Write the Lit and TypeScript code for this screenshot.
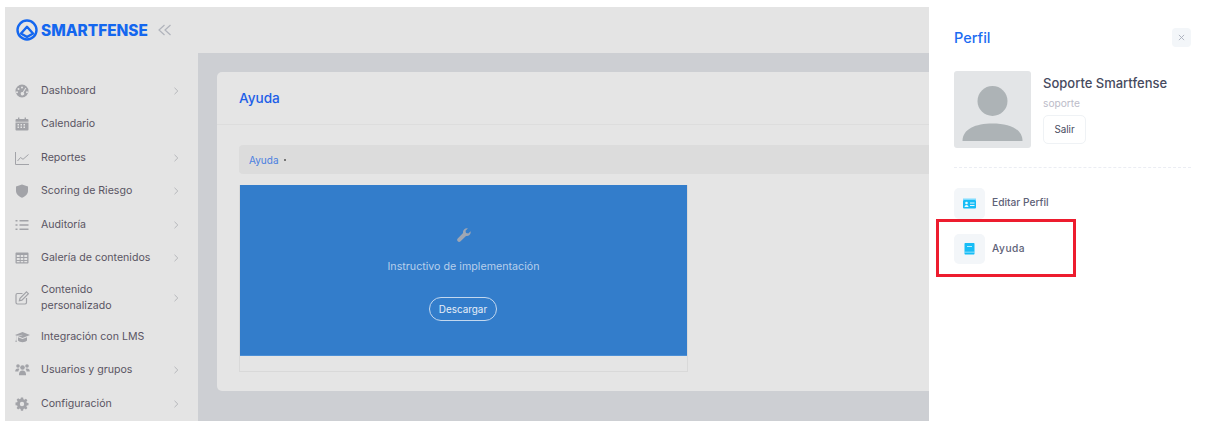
import { LitElement, html, css, svg } from "lit";
import { customElement } from "lit/decorators.js";

const ICONS: Record<string, unknown> = {
  gauge: svg`<path fill-rule="evenodd" d="M7 .5a6.500 6.500 0 1 0 0 13 6.500 6.500 0 0 0 0-13ZM7 2.400a1 1 0 1 1 0 2 1 1 0 0 1 0-2ZM3.500 3.900a1 1 0 1 1 0 2 1 1 0 0 1 0-2ZM2 7.200a1 1 0 1 1 0 2 1 1 0 0 1 0-2Zm10 0a1 1 0 1 1 0 2 1 1 0 0 1 0-2ZM10.400 3.700l.8.5-2.600 4.300a1.700 1.700 0 1 1-.9-.5l2.700-4.300Z"/>`,
  calendar: svg`<path fill-rule="evenodd" d="M3 .5h1.400V2h5.200V.5H11V2h1.600c.5 0 .9.4.9.9V4.800H.5V2.900c0-.5.4-.9.9-.9H3V.5ZM.5 5.600h13v7c0 .5-.4.9-.9.9H1.400a.9.9 0 0 1-.9-.9v-7Zm2 1.400v1.400H4V7H2.500Zm3 0v1.400H7V7H5.500Zm3 0v1.400H10V7H8.500Zm-6 2.600V11H4V9.600H2.500Zm3 0V11H7V9.600H5.500Zm3 0V11H10V9.600H8.500Z"/>`,
  chart: svg`<path fill="none" stroke="currentColor" stroke-width="1" d="M.5 1v12.500H14M2.500 10l3-3.500 2.500 1.800L13.500 3.500"/>`,
  shield: svg`<path d="M7 .5 13 2.500v4.300c0 3.400-2.500 5.700-6 6.900-3.500-1.200-6-3.500-6-6.900V2.500Z"/>`,
  list: svg`<path d="M.5 2h2v1.500h-2ZM4.500 2h9v1.500h-9ZM.5 6.200h2v1.500h-2ZM4.500 6.200h9v1.500h-9ZM.5 10.500h2V12h-2ZM4.500 10.500h9V12h-9Z"/>`,
  table: svg`<path fill-rule="evenodd" d="M1.500 1.500h11c.6 0 1 .4 1 1v9c0 .6-.4 1-1 1h-11c-.6 0-1-.4-1-1v-9c0-.6.4-1 1-1ZM1.800 4v2.100h2.900V4Zm3.900 0v2.100h2.600V4Zm3.600 0v2.100h2.900V4ZM1.800 7v2h2.900V7Zm3.900 0v2h2.600V7Zm3.600 0v2h2.900V7ZM1.800 10v1.300h2.900V10Zm3.900 0v1.300h2.600V10Zm3.600 0v1.300h2.900V10Z"/>`,
  edit: svg`<path fill="none" stroke="currentColor" stroke-width="1.200" d="M7.500 2.500H2.400c-.8 0-1.400.6-1.400 1.400v7.700c0 .8.6 1.400 1.400 1.400h7.700c.8 0 1.400-.6 1.400-1.400V7"/><path d="M11.500.8l1.900 1.900-6.500 6.500-2.500.6.6-2.500Z" fill="none" stroke="currentColor" stroke-width="1.200"/>`,
  cap: svg`<path d="M7.500 2 15 5 7.500 8 2.800 6.100 7.400 5.300 7.300 4.800 1.800 5.700 0 5ZM3 7.200l4.500 1.800L12 7.200v3.300c-1 1.100-2.700 1.700-4.500 1.700S4 11.600 3 10.500ZM1.200 6v3.500l.6 2.500H.4L1 9.500V5.800Z"/>`,
  users: svg`<circle cx="3" cy="3" r="1.800"/><circle cx="12" cy="3" r="1.800"/><circle cx="7.500" cy="4.500" r="2.300"/><path d="M.2 8.600C.2 6.800 1.200 5.600 3 5.600c.6 0 1 .1 1.400.4-.6.7-1 1.600-1 2.600H.2ZM14.800 8.600c0-1.800-1-3-2.800-3-.6 0-1 .1-1.400.4.6.7 1 1.600 1 2.600ZM4 11.200c0-2.200 1.400-3.800 3.500-3.800S11 9 11 11.200v1H4Z"/>`,
  cog: svg`<path fill-rule="evenodd" d="M5.900.5h2.200l.3 1.800 1 .4 1.500-1 1.500 1.500-1 1.500.4 1 1.700.3v2.200l-1.700.3-.4 1 1 1.500-1.500 1.500-1.500-1-1 .4-.3 1.800H5.900l-.3-1.800-1-.4-1.500 1-1.500-1.500 1-1.500-.4-1-1.700-.3V5.500l1.700-.3.4-1-1-1.500 1.500-1.500 1.500 1 1-.4ZM7 4.800a2.200 2.200 0 1 0 0 4.400 2.200 2.200 0 0 0 0-4.400Z"/>`,
};

const NAV: { icon: string; label: string[]; arrow: boolean }[] = [
  { icon: "gauge", label: ["Dashboard"], arrow: true },
  { icon: "calendar", label: ["Calendario"], arrow: false },
  { icon: "chart", label: ["Reportes"], arrow: true },
  { icon: "shield", label: ["Scoring de Riesgo"], arrow: true },
  { icon: "list", label: ["Auditoría"], arrow: true },
  { icon: "table", label: ["Galería de contenidos"], arrow: true },
  { icon: "edit", label: ["Contenido", "personalizado"], arrow: true },
  { icon: "cap", label: ["Integración con LMS"], arrow: false },
  { icon: "users", label: ["Usuarios y grupos"], arrow: true },
  { icon: "cog", label: ["Configuración"], arrow: true },
];

@customElement("app-root")
export class AppRoot extends LitElement {
  static styles = css`
    :host {
      display: block;
      width: 1216px;
      height: 433px;
      overflow: hidden;
      background: #fff;
      font-family: Inter, "Noto Sans", sans-serif;
    }
    .page { display: flex; height: 433px; }
    .shot {
      width: 924px;
      height: 414px;
      margin: 7px 0 0 5px;
      display: flex;
      background: #cdcfd3;
      overflow: hidden;
      flex: none;
    }
    .side {
      width: 193px;
      flex: none;
      background: #e4e4e4;
      display: flex;
      flex-direction: column;
    }
    .brand {
      height: 46px;
      display: flex;
      align-items: center;
      padding-left: 11px;
      margin-bottom: 21px;
      color: #1467ef;
    }
    .brand .logo { width: 22px; height: 22px; margin-right: 3px; }
    .brand b { font-size: 15.400px; font-weight: 800; }
    .brand .coll { width: 14px; height: 12px; margin-left: 10px; color: #b0b3bb; }
    .nav { display: flex; flex-direction: column; }
    .row {
      display: flex;
      align-items: center;
      min-height: 33.500px;
      padding-left: 10px;
      color: #5a5563;
      font-size: 10.600px;
      line-height: 16px;
    }
    .row.two { min-height: 45px; }
    .row .ic { width: 14px; height: 14px; color: #a2a3a8; fill: currentColor; flex: none; overflow: visible; }
    .row .lbl { margin-left: 12px; width: 132px; flex: none; }
    .row .chev { width: 6px; height: 8px; color: #b5b6ba; flex: none; }
    .main { flex: 1; display: flex; flex-direction: column; min-width: 0; }
    .top { height: 46px; background: #e4e4e4; flex: none; }
    .card {
      margin: 19px 0 0 19px;
      height: 319px;
      background: #e5e5e5;
      border-radius: 5px 0 0 5px;
      flex: none;
    }
    .card-h {
      height: 52px;
      display: flex;
      align-items: center;
      padding-left: 22px;
      color: #1d5fe8;
      font-size: 13.600px;
      font-weight: 500;
      border-bottom: 1px solid #dddddd;
    }
    .card-b { padding: 20px 0 0 22px; }
    .crumb {
      height: 29px;
      background: #dcdcdc;
      border-radius: 4px 0 0 4px;
      display: flex;
      align-items: center;
      padding-left: 10px;
      font-size: 10px;
      color: #4a7fe0;
      gap: 5px;
    }
    .crumb i { width: 2px; height: 2px; border-radius: 50%; background: #555; }
    .tile {
      margin-top: 11px;
      width: 447px;
      height: 186px;
      border: 1px solid #d9d9d9;
      border-top: 0;
    }
    .blue {
      height: 171px;
      background: #337dcb;
      border-bottom: 1px solid #4b8fd6;
      display: flex;
      flex-direction: column;
      align-items: center;
      color: #b7cfeb;
      box-sizing: border-box;
      padding-top: 43px;
    }
    .blue svg { width: 14px; height: 14px; color: #9ea6b3; fill: currentColor; }
    .blue p { margin: 18px 0 0; font-size: 10.700px; line-height: 14px; }
    .dl {
      margin: 23px 1px 0 0;
      width: 68px;
      height: 24px;
      border: 1px solid #c3d8ef;
      border-radius: 12px;
      box-sizing: border-box;
      display: flex;
      align-items: center;
      justify-content: center;
      color: #e6eef8;
      font-size: 9.900px;
    }
    .panel {
      flex: 1;
      padding: 27.500px 25px 0 25px;
    }
    .p-head { display: flex; justify-content: space-between; align-items: center; height: 19px; }
    .p-head h2 { margin: 0; font-size: 14.500px; font-weight: 500; color: #1a6bf2; }
    .x {
      width: 19px;
      height: 19px;
      border-radius: 4px;
      background: #f3f6f9;
      display: flex;
      align-items: center;
      justify-content: center;
      color: #a7adb9;
    }
    .x svg { width: 7px; height: 7px; }
    .who { display: flex; margin-top: 24.500px; gap: 12px; }
    .avatar { width: 77px; height: 77px; border-radius: 3px; display: block; flex: none; }
    .who .n { font-size: 13px; line-height: 16px; color: #464a5e; font-weight: 500; margin-top: 4px; }
    .who .s { font-size: 10.200px; line-height: 14px; color: #bcbcc9; margin-top: 5px; }
    .salir {
      margin-top: 5px;
      width: 43px;
      height: 29px;
      border: 1px solid #eff2f5;
      border-radius: 5px;
      box-sizing: border-box;
      display: flex;
      align-items: center;
      justify-content: center;
      font-size: 9.800px;
      color: #464a5e;
    }
    .sep { margin-top: 19px; border-top: 1px dashed #ebedf3; }
    .links { margin-top: 20px; display: flex; flex-direction: column; gap: 15px; }
    .link { display: flex; align-items: center; gap: 7px; position: relative; font-size: 10.200px; font-weight: 500; color: #5e6278; }
    .link span { position: relative; top: -1px; }
    .link .wide { letter-spacing: 0.500px; }
    .box {
      width: 31px;
      height: 30.500px;
      border-radius: 5px;
      background: #f3f6f9;
      display: flex;
      align-items: center;
      justify-content: center;
      flex: none;
    }
    .box svg { width: 15px; height: 15px; }
    .mark {
      position: absolute;
      left: -18px;
      top: -15px;
      width: 140px;
      height: 58px;
      box-sizing: border-box;
      border: 3.500px solid #ed1c2e;
      pointer-events: none;
    }
  `;

  render() {
    return html`
      <div class="page">
        <div class="shot">
          <aside class="side">
            <div class="brand">
              <svg class="logo" viewBox="0 0 22 22" fill="none" stroke="currentColor" stroke-width="2.400">
                <circle cx="11" cy="11" r="9.500" />
                <path d="M5 14.500 11 7.800 17 14.500 11 18Z" stroke-linejoin="round" />
              </svg>
              <b>SMARTFENSE</b>
              <svg class="coll" viewBox="0 0 14 12" fill="none" stroke="currentColor" stroke-width="1.200">
                <path d="M6.500 1 1 6l5.500 5M12.500 1 7 6l5.500 5" />
              </svg>
            </div>
            <nav class="nav">
              ${NAV.map(
                (n) => html`
                  <div class="row ${n.label.length > 1 ? "two" : ""}">
                    <svg class="ic" viewBox="0 0 14 14">${ICONS[n.icon]}</svg>
                    <div class="lbl">${n.label.map((l) => html`<div>${l}</div>`)}</div>
                    ${n.arrow
                      ? html`<svg class="chev" viewBox="0 0 6 8" fill="none" stroke="currentColor" stroke-width="1"><path d="M1.500 .8 4.800 4 1.500 7.200" /></svg>`
                      : ""}
                  </div>
                `
              )}
            </nav>
          </aside>
          <div class="main">
            <div class="top"></div>
            <section class="card">
              <div class="card-h">Ayuda</div>
              <div class="card-b">
                <div class="crumb"><span>Ayuda</span><i></i></div>
                <div class="tile">
                  <div class="blue">
                    <svg viewBox="0 0 14 14">
                      <path d="M13.600 3.300c.3 1.400-.1 2.700-1.100 3.700-1 1-2.300 1.300-3.500 1L3.600 13.300c-.8.8-2.100.8-2.900 0s-.8-2.100 0-2.900L6.100 5c-.3-1.200 0-2.500 1-3.500 1-1 2.400-1.400 3.700-1.100L8.500 2.700l.5 2.300 2.300.5Z" />
                    </svg>
                    <p>Instructivo de implementación</p>
                    <div class="dl">Descargar</div>
                  </div>
                </div>
              </div>
            </section>
          </div>
        </div>
        <aside class="panel">
          <div class="p-head">
            <h2>Perfil</h2>
            <div class="x">
              <svg viewBox="0 0 8 8" fill="none" stroke="currentColor" stroke-width="1"><path d="M1 1l6 6M7 1 1 7" /></svg>
            </div>
          </div>
          <div class="who">
            <svg class="avatar" viewBox="0 0 77 77">
              <rect width="77" height="77" fill="#e3e5e7" />
              <circle cx="38.500" cy="30" r="15" fill="#adb3b6" />
              <path d="M8.500 70c0-12 13-17.500 30-17.500s30 5.500 30 17.500Z" fill="#adb3b6" />
            </svg>
            <div>
              <div class="n">Soporte Smartfense</div>
              <div class="s">soporte</div>
              <div class="salir">Salir</div>
            </div>
          </div>
          <div class="sep"></div>
          <div class="links">
            <div class="link">
              <div class="box">
                <svg viewBox="0 0 15 15">
                  <path fill="#7fdcff" d="M1 2.500h13v1.500H1Z" />
                  <rect x="1" y="4" width="13" height="8.500" rx="1" fill="#17bdf6" />
                  <circle cx="4.500" cy="7" r="1.300" fill="#eaf9ff" />
                  <path d="M2.500 11c0-1.300 1-2 2-2s2 .7 2 2Z" fill="#eaf9ff" />
                  <path d="M8 6.500h4.500v1H8ZM8 9h4.500v1H8Z" fill="#eaf9ff" />
                </svg>
              </div>
              <span>Editar Perfil</span>
            </div>
            <div class="link">
              <div class="box">
                <svg viewBox="0 0 15 15">
                  <path fill="#17bdf6" d="M3.500 2h8c.6 0 1 .4 1 1v9.500c0 .6-.4 1-1 1h-8c-.6 0-1-.4-1-1V3c0-.6.4-1 1-1Z" />
                  <path fill="#b6ecff" d="M5 5h5v1H5ZM2.500 10.800h10v.8h-10Z" />
                </svg>
              </div>
              <span class="wide">Ayuda</span>
              <div class="mark"></div>
            </div>
          </div>
        </aside>
      </div>
    `;
  }
}
